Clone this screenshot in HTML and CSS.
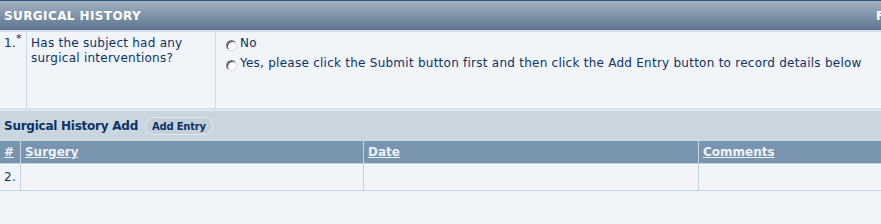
FILE: index.html
```html
<!DOCTYPE html>
<html>

<head>
	<title>
		Surgical History
	</title>

	<link rel="stylesheet" href="styles.css">

</head>

<body>
	<div class="panel-header">
		<span class="panel-title">SURGICAL HISTORY</span>
		<span class="panel-right">F</span>
	</div>

	<table class="question">
		<tr>
			<td class="q-num">1.<sup>*</sup></td>
			<td class="q-text">Has the subject had any surgical interventions?</td>
			<td class="q-answer">
				<label class="choice"><input type="radio" name="surg"> No</label>
				<label class="choice"><input type="radio" name="surg"> Yes, please click the Submit button first and then click the Add Entry button to record details below</label>
			</td>
		</tr>
	</table>

	<div class="add-bar">
		<span class="add-title">Surgical History Add</span>
		<button class="add-btn">Add Entry</button>
	</div>

	<table class="entries">
		<tr>
			<th class="c-num"><a href="#">#</a></th>
			<th class="c-surgery"><a href="#">Surgery</a></th>
			<th class="c-date"><a href="#">Date</a></th>
			<th><a href="#">Comments</a></th>
		</tr>
		<tr>
			<td>2.</td>
			<td></td>
			<td></td>
			<td></td>
		</tr>
	</table>
</body>

</html>
```

FILE: styles.css
```css
body {
	margin: 0;
	background: #f1f4f9;
	font-family: "DejaVu Sans", Verdana, sans-serif;
	font-size: 12px;
	letter-spacing: 0.25px;
	color: #0d3264;
}

.panel-header {
	height: 29px;
	border-top: 1px solid #37536f;
	border-bottom: 2px solid #d6e0ea;
	background: linear-gradient(#a3b3c4, #5d738d);
	display: flex;
	align-items: center;
	justify-content: space-between;
	overflow: hidden;
}

.panel-title {
	color: #ffffff;
	font-weight: bold;
	font-size: 12px;
	padding-left: 4px;
	letter-spacing: 0.4px;
}

.panel-right {
	color: #ffffff;
	font-weight: bold;
	font-size: 12px;
	padding-right: 1px;
	width: 4px;
	overflow: hidden;
}

.question {
	width: 100%;
	border-collapse: collapse;
	border-bottom: 2px solid #d6e0ea;
}

.question td {
	vertical-align: top;
	height: 72px;
	padding: 4px 4px 0 4px;
	line-height: 15px;
}

.q-num {
	width: 18px;
	border-right: 1px solid #cfdae6;
	white-space: nowrap;
}

.q-num sup {
	font-size: 11px;
	line-height: 0;
	vertical-align: 5px;
}

.q-text {
	width: 180px;
	border-right: 1px solid #cfdae6;
}

.q-answer {
	padding-left: 10px !important;
}

.choice {
	display: flex;
	align-items: center;
	height: 15px;
	margin-bottom: 5px;
	white-space: nowrap;
}

.choice input {
	appearance: none;
	width: 11px;
	height: 11px;
	margin: 3px 3px 0 0;
	border-radius: 50%;
	border: 1px solid #808080;
	border-right-color: #e0e0e0;
	border-bottom-color: #e0e0e0;
	background: #ffffff;
	box-shadow: inset 1px 1px 0 #404040;
}

.add-bar {
	height: 30px;
	border-top: 1px solid #dfe7ef;
	background: #c9d5df;
	display: flex;
	align-items: center;
	padding-left: 4px;
}

.add-title {
	font-weight: bold;
	font-size: 12px;
	letter-spacing: -0.25px;
	color: #0d3264;
}

.add-btn {
	margin-left: 7px;
	height: 18px;
	padding: 0 6px;
	border: 1px solid #e0e8ef;
	border-radius: 9px;
	background: #c3d0dc;
	color: #0d3264;
	font-family: "DejaVu Sans", Verdana, sans-serif;
	font-weight: bold;
	font-size: 10px;
	letter-spacing: -0.2px;
}

.entries {
	width: 100%;
	border-collapse: collapse;
}

.entries th {
	background: #7894ae;
	height: 22px;
	text-align: left;
	padding: 0 4px;
	border-left: 1px solid #c6d4e2;
	border-bottom: 1px solid #c6d4e2;
	font-size: 12px;
	letter-spacing: 0;
}

.entries th:first-child,
.entries td:first-child {
	border-left: none;
}

.entries th a {
	color: #eef3f8;
	font-weight: bold;
}

.entries td {
	height: 26px;
	padding: 0 4px;
	border-left: 1px solid #c6d4e2;
	border-bottom: 1px solid #c6d4e2;
}

.c-num {
	width: 10px;
}

.c-surgery {
	width: 334px;
}

.c-date {
	width: 326px;
}
```
